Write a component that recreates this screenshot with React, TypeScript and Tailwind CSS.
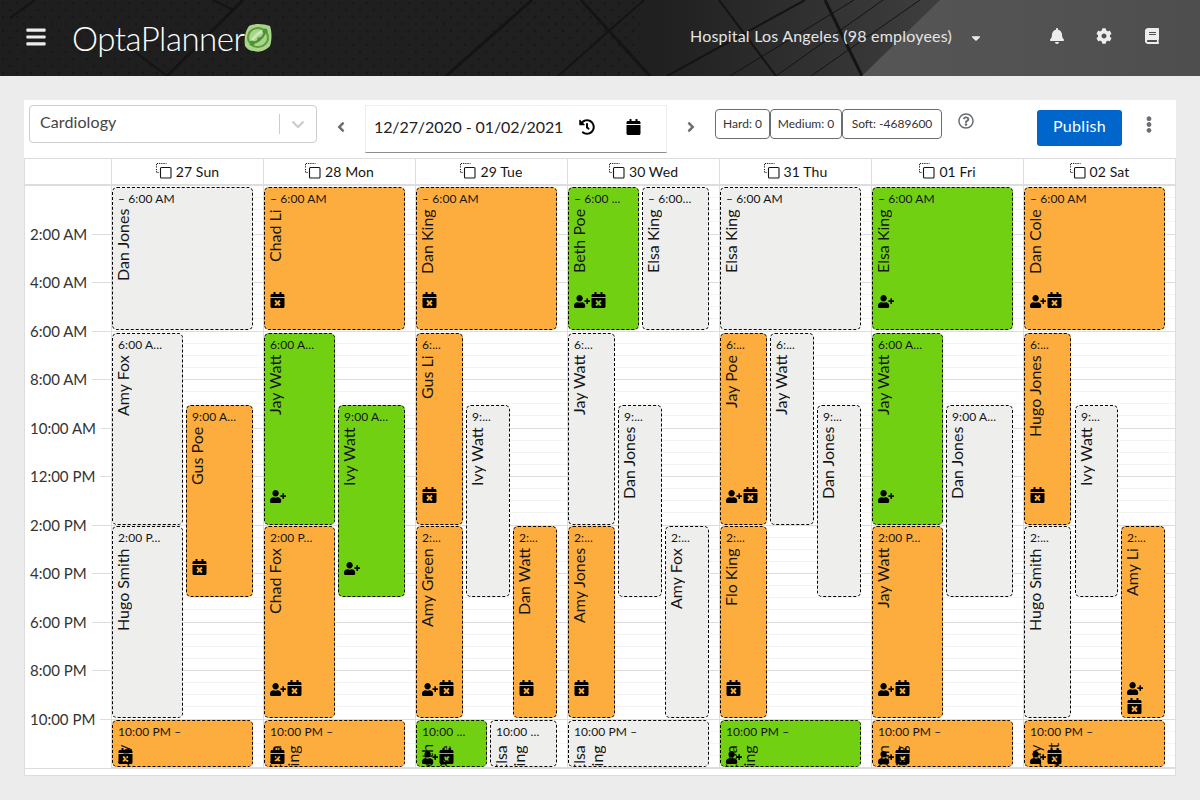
import React from "react";
import {
  FaBars,
  FaBell,
  FaCog,
  FaBook,
  FaCaretDown,
  FaAngleLeft,
  FaAngleRight,
  FaHistory,
  FaCalendar,
  FaCalendarTimes,
  FaUserPlus,
  FaRegQuestionCircle,
  FaEllipsisV,
} from "react-icons/fa";

type Color = "o" | "g" | "n";
type Shift = {
  c: number;
  x: [number, number];
  y: [number, number];
  k: Color;
  t: string;
  n: string;
  i?: string;
  b?: number;
  stack?: boolean;
};

const Y1: [number, number] = [187, 330];
const Y2: [number, number] = [333, 525];
const Y3: [number, number] = [526, 718];
const Y4: [number, number] = [405, 597];
const Y5: [number, number] = [720, 767];
const F: [number, number] = [0, 141];

const shifts: Shift[] = [
  { c: 0, x: F, y: Y1, k: "n", t: "– 6:00 AM", n: "Dan Jones" },
  { c: 0, x: [0, 71], y: Y2, k: "n", t: "6:00 A...", n: "Amy Fox" },
  { c: 0, x: [0, 71], y: Y3, k: "n", t: "2:00 P...", n: "Hugo Smith" },
  { c: 0, x: [74, 141], y: Y4, k: "o", t: "9:00 A...", n: "Gus Poe", i: "c" },
  { c: 0, x: F, y: Y5, k: "o", t: "10:00 PM –", n: "Jay", i: "c", b: 3 },

  { c: 1, x: F, y: Y1, k: "o", t: "– 6:00 AM", n: "Chad Li", i: "c" },
  { c: 1, x: [0, 71], y: Y2, k: "g", t: "6:00 A...", n: "Jay Watt", i: "p" },
  { c: 1, x: [0, 71], y: Y3, k: "o", t: "2:00 P...", n: "Chad Fox", i: "pc" },
  { c: 1, x: [74, 141], y: Y4, k: "g", t: "9:00 A...", n: "Ivy Watt", i: "p" },
  { c: 1, x: F, y: Y5, k: "o", t: "10:00 PM –", n: "Elsa King", i: "c", b: 3 },

  { c: 2, x: F, y: Y1, k: "o", t: "– 6:00 AM", n: "Dan King", i: "c" },
  { c: 2, x: [0, 47], y: Y2, k: "o", t: "6:...", n: "Gus Li", i: "c" },
  { c: 2, x: [0, 47], y: Y3, k: "o", t: "2:...", n: "Amy Green", i: "pc" },
  { c: 2, x: [50, 94], y: Y4, k: "n", t: "9:...", n: "Ivy Watt" },
  { c: 2, x: [97, 141], y: Y3, k: "o", t: "2:...", n: "Dan Watt", i: "c" },
  { c: 2, x: [0, 71], y: Y5, k: "g", t: "10:00 ...", n: "Beth Poe", i: "pc", b: 3 },
  { c: 2, x: [74, 141], y: Y5, k: "n", t: "10:00 ...", n: "Elsa King" },

  { c: 3, x: [0, 71], y: Y1, k: "g", t: "– 6:00 ...", n: "Beth Poe", i: "pc" },
  { c: 3, x: [74, 141], y: Y1, k: "n", t: "– 6:00...", n: "Elsa King" },
  { c: 3, x: [0, 47], y: Y2, k: "n", t: "6:...", n: "Jay Watt" },
  { c: 3, x: [0, 47], y: Y3, k: "o", t: "2:...", n: "Amy Jones", i: "c" },
  { c: 3, x: [50, 94], y: Y4, k: "n", t: "9:...", n: "Dan Jones" },
  { c: 3, x: [97, 141], y: Y3, k: "n", t: "2:...", n: "Amy Fox" },
  { c: 3, x: F, y: Y5, k: "n", t: "10:00 PM –", n: "Elsa King" },

  { c: 4, x: F, y: Y1, k: "n", t: "– 6:00 AM", n: "Elsa King" },
  { c: 4, x: [0, 47], y: Y2, k: "o", t: "6:...", n: "Jay Poe", i: "pc" },
  { c: 4, x: [50, 94], y: Y2, k: "n", t: "6:...", n: "Jay Watt" },
  { c: 4, x: [97, 141], y: Y4, k: "n", t: "9:...", n: "Dan Jones" },
  { c: 4, x: [0, 47], y: Y3, k: "o", t: "2:...", n: "Flo King", i: "c" },
  { c: 4, x: F, y: Y5, k: "g", t: "10:00 PM –", n: "Elsa King", i: "p", b: 3 },

  { c: 5, x: F, y: Y1, k: "g", t: "– 6:00 AM", n: "Elsa King", i: "p" },
  { c: 5, x: [0, 71], y: Y2, k: "g", t: "6:00 A...", n: "Jay Watt", i: "p" },
  { c: 5, x: [0, 71], y: Y3, k: "o", t: "2:00 P...", n: "Jay Watt", i: "pc" },
  { c: 5, x: [74, 141], y: Y4, k: "n", t: "9:00 A...", n: "Dan Jones" },
  { c: 5, x: F, y: Y5, k: "o", t: "10:00 PM –", n: "Dan King", i: "pc", b: 3 },

  { c: 6, x: F, y: Y1, k: "o", t: "– 6:00 AM", n: "Dan Cole", i: "pc" },
  { c: 6, x: [0, 47], y: Y2, k: "o", t: "6:...", n: "Hugo Jones", i: "c" },
  { c: 6, x: [0, 47], y: Y3, k: "n", t: "2:...", n: "Hugo Smith" },
  { c: 6, x: [51, 94], y: Y4, k: "n", t: "9:...", n: "Ivy Watt" },
  { c: 6, x: [97, 141], y: Y3, k: "o", t: "2:...", n: "Amy Li", i: "pc", b: 4, stack: true },
  { c: 6, x: F, y: Y5, k: "o", t: "10:00 PM –", n: "Jay Watt", i: "pc", b: 3 },
];

const days = ["27 Sun", "28 Mon", "29 Tue", "30 Wed", "31 Thu", "01 Fri", "02 Sat"];
const hours = ["2:00 AM", "4:00 AM", "6:00 AM", "8:00 AM", "10:00 AM", "12:00 PM", "2:00 PM", "4:00 PM", "6:00 PM", "8:00 PM", "10:00 PM"];
const cells = Array.from({ length: 48 }, (_, i) => i);

function CopyIcon() {
  return (
    <svg width="16" height="16" viewBox="0 0 16 16" className="mb-[1px] shrink-0">
      <path d="M.5 4.5V.5h10" fill="none" stroke="#151515" strokeWidth="1" strokeDasharray="1.2 1" />
      <path d="M.5 6v3.5H3" fill="none" stroke="#151515" strokeWidth="1" strokeDasharray="1.2 1" />
      <rect x="4.5" y="4.5" width="10.5" height="10.5" rx="1" fill="none" stroke="#151515" strokeWidth="1.1" />
    </svg>
  );
}

function Logo() {
  return (
    <svg width="28" height="30" viewBox="0 0 28 30" className="shrink-0">
      <path d="M5 3 C11 0 20 1 26 3 C28 9 28 17 26 23 C22 27 16 30 10 28 C6 28 3 26 1 23 C0 16 1 8 5 3Z" fill="#a9d48a" />
      <ellipse cx="14" cy="14.5" rx="10" ry="9.5" fill="none" stroke="#5d9e3f" strokeWidth="2" />
      <path d="M6 21 C10 13 16 8 23 7" fill="none" stroke="#cfe8bd" strokeWidth="2.4" />
      <path d="M8 20 C12 20 18 16 21 10" fill="none" stroke="#4f9233" strokeWidth="2.2" />
      <circle cx="21" cy="8" r="2.6" fill="#4f9233" />
      <circle cx="8" cy="20" r="2.6" fill="#4f9233" />
      <circle cx="15" cy="16" r="1.8" fill="#4f9233" />
    </svg>
  );
}

function HeaderArt() {
  const lines: [number, number, number, number, number][] = [
    [243, 0, 167, 76, 3],
    [117, 38, 167, 76, 2],
    [213, 0, 233, 10, 2],
    [35, 0, 10, 18, 2],
    [532, 0, 446, 76, 3],
    [581, 0, 650, 76, 3],
    [644, 0, 558, 76, 2],
    [719, 0, 776, 76, 2],
    [805, 0, 667, 76, 2],
    [825, 0, 862, 76, 3],
    [854, 0, 730, 76, 1],
    [883, 0, 776, 76, 1],
    [920, 0, 811, 76, 1],
  ];
  return (
    <svg className="absolute inset-0" width="1200" height="76" viewBox="0 0 1200 76">
      <defs>
        <pattern id="dots" width="14" height="14" patternUnits="userSpaceOnUse">
          <circle cx="3" cy="3" r="1.3" fill="#131313" />
          <circle cx="10" cy="10" r="1.3" fill="#131313" />
        </pattern>
        <linearGradient id="lite" x1="0" y1="0" x2="1" y2="0">
          <stop offset="0" stopColor="#565656" />
          <stop offset="1" stopColor="#4e4e4e" />
        </linearGradient>
        <linearGradient id="mid" x1="0" x2="1" y1="0" y2="0">
          <stop offset="0" stopColor="#1e1e1e" />
          <stop offset="0.55" stopColor="#202020" />
          <stop offset="0.78" stopColor="#3e3e3e" />
        </linearGradient>
      </defs>
      <rect width="1200" height="76" fill="url(#mid)" />
      <rect width="640" height="76" fill="url(#dots)" opacity="0.6" />
      {lines.map((l, i) => (
        <line key={i} x1={l[0]} y1={l[1]} x2={l[2]} y2={l[3]} stroke="#141414" strokeWidth={l[4]} />
      ))}
      <polygon points="940,0 1200,0 1200,76 862,76" fill="url(#lite)" />
    </svg>
  );
}

const bg: Record<Color, string> = {
  o: "bg-[#fdad3d]",
  g: "bg-[#72d013]",
  n: "bg-[#eeeeed]",
};

function Event({ s }: { s: Shift }) {
  const h = s.y[1] - s.y[0];
  const short = h <= 50;
  const hasP = s.i?.includes("p");
  const hasC = s.i?.includes("c");
  return (
    <div
      className={`absolute z-10 overflow-hidden rounded-[5px] border border-dashed border-black pl-[5px] text-[#151515] ${bg[s.k]}`}
      style={{ left: s.x[0], top: s.y[0] - 186, width: s.x[1] - s.x[0], height: h }}
    >
      <div className="h-[21px] overflow-hidden whitespace-nowrap pt-[2px] text-[12px] leading-[18px] tracking-[0.1px]">{s.t}</div>
      <div
        className="-ml-[4px] rotate-180 text-end text-[16px] leading-[18px] [writing-mode:vertical-rl]"
        style={{ height: short ? 32 : h - 30, marginTop: short ? 3 : 0 }}
      >
        {s.n}
      </div>
      {s.i && (
        <div
          className={`absolute left-[5px] flex ${s.stack ? "flex-col items-start gap-[3px]" : "items-end gap-[1px]"}`}
          style={{ bottom: (s.b ?? 22) - 1 }}
        >
          {hasP && <FaUserPlus className="h-[13px] w-[16px] text-black" />}
          {hasC && <FaCalendarTimes className="h-[16px] w-[15px] text-black" />}
        </div>
      )}
    </div>
  );
}

export default function App() {
  return (
    <div className="min-h-[800px] bg-[#ececec] font-['Lato',sans-serif] text-[#151515]">
      <header className="relative flex h-[76px] items-center overflow-hidden text-[#ededed]">
        <HeaderArt />
        <div className="relative flex w-full items-center">
          <FaBars className="mb-[2px] ml-[25px] h-[22px] w-[22px]" />
          <span className="ml-[25px] w-[171px] whitespace-nowrap text-[33px] font-light leading-[40px] tracking-[-0.5px] text-white">OptaPlanner</span>
          <span className="ml-[1px]">
            <Logo />
          </span>
          <div className="mb-[4px] flex items-center">
            <span className="ml-[418px] text-[16px] tracking-[0.2px] text-[#e4e4e4]">Hospital Los Angeles (98 employees)</span>
            <FaCaretDown className="ml-[19px] mt-[3px] h-[14px] w-[10px]" />
            <FaBell className="ml-[68px] h-[16px] w-[16px]" />
            <FaCog className="ml-[31px] h-[16px] w-[16px]" />
            <FaBook className="ml-[33px] h-[16px] w-[14px]" />
          </div>
        </div>
      </header>

      <main className="px-[24px] pt-[24px]">
        <div className="bg-white">
          <div className="flex h-[58px] items-start">
            <div className="ml-[5px] mt-[5px] flex h-[38px] w-[288px] items-center rounded-[4px] border border-[#ccc] pl-[10px] text-[16px] tracking-[0.1px] text-[#444]">
              <span className="mb-[4px] flex-1">Cardiology</span>
              <span className="h-[20px] w-px bg-[#ccc]" />
              <svg width="20" height="20" viewBox="0 0 20 20" className="mx-[8px]">
                <path d="M4.5 7.5 10 13l5.5-5.5" fill="none" stroke="#ccc" strokeWidth="2.2" />
              </svg>
            </div>
            <FaAngleLeft className="ml-[17px] mt-[19px] h-[16px] w-[14px] text-[#6a6e73]" />
            <div className="ml-[17px] mt-[5px] flex h-[48px] w-[302px] items-center border border-[#eee] border-b-[#8a8d90] pl-[8px] text-[16px] tracking-[-0.1px] text-[#222]">
              <span className="mb-[4px] w-[205px] whitespace-nowrap">12/27/2020 - 01/02/2021</span>
              <FaHistory className="mb-[4px] h-[16px] w-[16px] text-black" />
              <FaCalendar className="mb-[4px] ml-[31px] h-[16px] w-[15px] text-black" />
            </div>
            <FaAngleRight className="ml-[17px] mt-[19px] h-[16px] w-[14px] text-[#6a6e73]" />
            <div className="ml-[17px] mt-[9px] flex text-[12px] leading-[27px] text-[#333]">
              <span className="h-[30px] w-[55px] rounded-[4px] border border-[#6a6e73] text-center">Hard: 0</span>
              <span className="h-[30px] w-[72px] rounded-[4px] border border-[#6a6e73] text-center">Medium: 0</span>
              <span className="h-[30px] w-[100px] rounded-[4px] border border-[#6a6e73] text-center">Soft: -4689600</span>
            </div>
            <FaRegQuestionCircle className="ml-[16px] mt-[13px] h-[16px] w-[16px] text-[#6a6e73]" />
            <button className="ml-[63px] mt-[10px] h-[36px] w-[85px] rounded-[3px] bg-[#0066cc] pb-[4px] text-[16px] tracking-[0.3px] text-white">Publish</button>
            <FaEllipsisV className="ml-[22px] mt-[16px] h-[17px] w-[10px] text-[#6a6e73]" />
          </div>

          <div className="h-[618px] border border-[#ddd]">
            <div className="grid h-[27px] grid-cols-[86px_repeat(7,152px)] border-b-2 border-[#ddd]">
              <div />
              {days.map((d) => (
                <div key={d} className="flex items-center justify-center gap-[4px] border-l border-[#ddd] text-[14px] tracking-[0.1px]">
                  <CopyIcon />
                  <span>{d}</span>
                </div>
              ))}
            </div>
            <div className="grid h-[583px] grid-cols-[86px_repeat(7,152px)] overflow-hidden border-b border-[#ddd]">
              <div className="pt-[24px]">
                {hours.map((h) => (
                  <div key={h} className="flex h-[48.53px] items-center gap-[5px] pl-[5px] text-[15px] text-[#333]">
                    <span className="mb-[1px] whitespace-nowrap">{h}</span>
                    <span className="h-px flex-1 bg-[#ddd]" />
                  </div>
                ))}
              </div>
              {days.map((d, c) => (
                <div key={d} className="relative border-l border-[#ddd]">
                  {cells.map((i) => (
                    <div key={i} className={`h-[12.13px] border-b ${i % 4 === 3 ? "border-[#ddd]" : "border-[#f3f3f3]"}`} />
                  ))}
                  {shifts
                    .filter((s) => s.c === c)
                    .map((s, i) => (
                      <Event key={i} s={s} />
                    ))}
                </div>
              ))}
            </div>
          </div>
        </div>
      </main>
    </div>
  );
}
